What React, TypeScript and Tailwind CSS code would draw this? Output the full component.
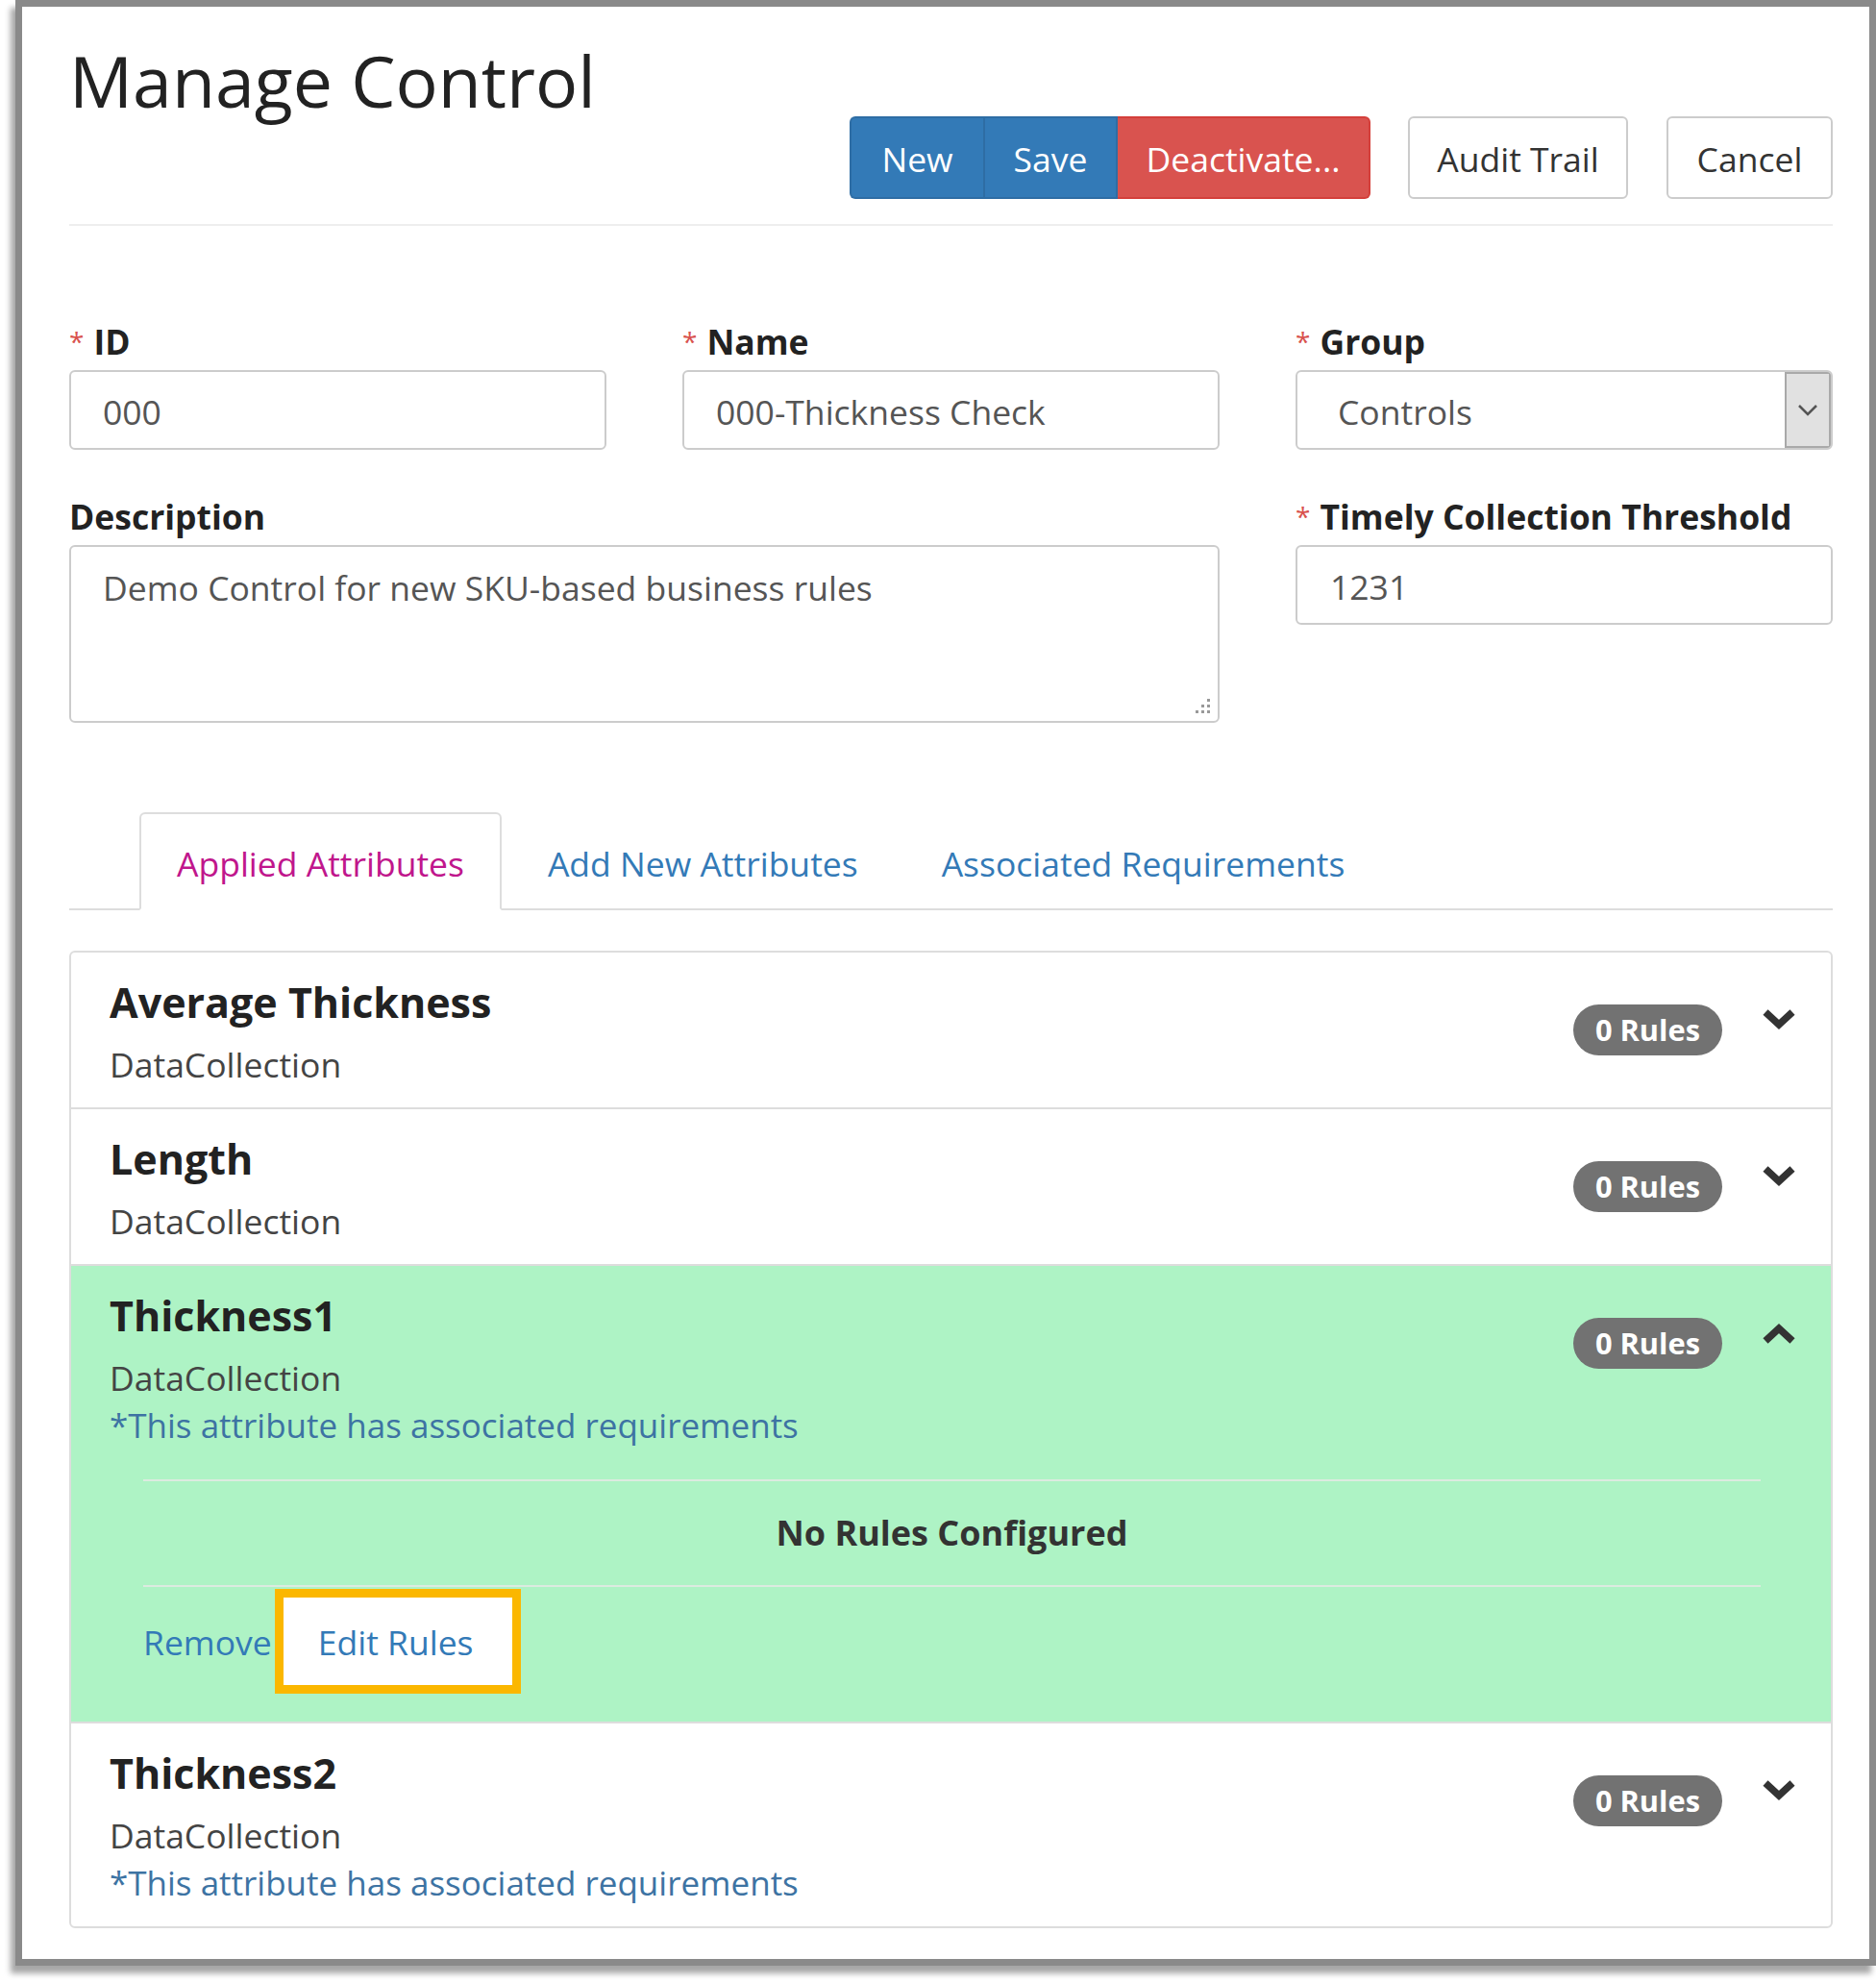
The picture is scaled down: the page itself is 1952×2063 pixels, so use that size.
import React from "react";

type Attribute = {
  name: string;
  type: string;
  note: boolean;
  open: boolean;
};

const attributes: Attribute[] = [
  { name: "Average Thickness", type: "DataCollection", note: false, open: false },
  { name: "Length", type: "DataCollection", note: false, open: false },
  { name: "Thickness1", type: "DataCollection", note: true, open: true },
  { name: "Thickness2", type: "DataCollection", note: true, open: false },
];

const Chevron: React.FC<{ up?: boolean }> = ({ up }) => (
  <svg width="38" height="26" viewBox="0 0 38 26" className="shrink-0">
    <polyline
      points={up ? "5,21 19,8 33,21" : "5,5 19,18 33,5"}
      fill="none"
      stroke="#333"
      strokeWidth="7.5"
    />
  </svg>
);

const Label: React.FC<{ text: string; required?: boolean }> = ({ text, required }) => (
  <label className="mb-[5px] block text-[35.5px] leading-[50px] font-bold text-[#222]">
    {required && <span className="mr-[10px] align-top text-[28px] font-normal text-[#d9534f]">*</span>}
    {text}
  </label>
);

const Field: React.FC<{ label: string; value: string; select?: boolean }> = ({ label, value, select }) => (
  <div>
    <Label text={label} required />
    <div className="flex h-[83px] items-center overflow-hidden rounded-[6px] border-2 border-[#ccc] bg-white text-[35.5px] text-[#555]">
      <span className={select ? "flex-1 pt-[5px] pl-[42px]" : "flex-1 pt-[5px] pl-[33px]"}>{value}</span>
      {select && (
        <div className="flex h-full w-[48px] items-center justify-center border-2 border-[#a9a9a9] bg-[#e1e1e1]">
          <svg width="22" height="14" viewBox="0 0 22 14">
            <polyline points="2,2 11,11 20,2" fill="none" stroke="#555" strokeWidth="2.5" />
          </svg>
        </div>
      )}
    </div>
  </div>
);

const AttributeRow: React.FC<{ item: Attribute; first: boolean; last: boolean }> = ({ item, first, last }) => (
  <div
    className={`px-[40px] pt-[27px] ${first ? "" : "border-t-2 border-[#ddd]"} ${
      item.open ? "bg-[#aef3c5] pb-[29px]" : last ? "pb-[20px]" : "pb-[20px]"
    }`}
  >
    <div className="flex items-start justify-between">
      <div>
        <h4 className="mb-[14px] text-[43px] leading-[50px] font-bold text-[#222]">{item.name}</h4>
        <p className="text-[35.5px] leading-[50px] text-[#444]">{item.type}</p>
        {item.note && (
          <p className="text-[35px] leading-[50px] text-[#3d73a3]">*This attribute has associated requirements</p>
        )}
      </div>
      <div className="-mr-[5px] flex items-start gap-[40px]">
        <span className="mt-[27px] flex h-[53px] items-center rounded-full bg-[#727272] px-[23px] text-[30.8px] font-bold text-white">
          0 Rules
        </span>
        <div className="mt-[30px]">
          <Chevron up={item.open} />
        </div>
      </div>
    </div>
    {item.open && (
      <div className="mt-[31px] mr-[33px] ml-[35px]">
        <div className="border-y-2 border-[#dcebe0] py-[29px] text-center text-[36px] leading-[50px] font-bold text-[#333]">
          No Rules Configured
        </div>
        <div className="mt-[2px] flex items-center text-[35.5px] text-[#337ab7]">
          <a className="leading-[50px]">Remove</a>
          <span className="ml-[3px] flex h-[109px] items-center border-[9px] border-[#fbb700] bg-white pr-[40px] pl-[36px] leading-[50px]">
            Edit Rules
          </span>
        </div>
      </div>
    )}
  </div>
);

export default function App() {
  return (
    <div className="h-[2063px] w-[1952px] bg-white font-['Open_Sans',sans-serif] text-[#333]">
      <div className="ml-[16px] box-border h-[2045px] w-[1936px] border-[7px] border-[#8a8a8a] bg-white pr-[38px] pl-[49px] shadow-[-5px_8px_6px_rgba(0,0,0,0.35)]">
        <header className="box-border flex h-[228px] items-start justify-between border-b-2 border-[#eee]">
          <h1 className="pt-[40px] text-[73.5px] leading-none font-normal text-[#222]">Manage Control</h1>
          <div className="mt-[114px] flex items-center text-[35.5px]">
            <div className="flex h-[86px] text-white">
              <button className="w-[139px] rounded-l-[6px] border-2 border-r-0 border-[#2e6da4] bg-[#337ab7] pt-[4px]">New</button>
              <button className="w-[140px] border-2 border-[#2e6da4] bg-[#337ab7] pt-[4px]">Save</button>
              <button className="w-[263px] rounded-r-[6px] border-2 border-l-0 border-[#d43f3a] bg-[#d9534f] pt-[4px]">
                Deactivate...
              </button>
            </div>
            <button className="ml-[39px] h-[86px] w-[229px] rounded-[6px] border-2 border-[#ccc] bg-white pt-[4px] text-[#333]">
              Audit Trail
            </button>
            <button className="ml-[40px] h-[86px] w-[173px] rounded-[6px] border-2 border-[#ccc] bg-white pt-[4px] text-[#333]">
              Cancel
            </button>
          </div>
        </header>

        <div className="mt-[95px] grid grid-cols-3 gap-x-[79px]">
          <Field label="ID" value="000" />
          <Field label="Name" value="000-Thickness Check" />
          <Field label="Group" value="Controls" select />
          <div className="col-span-2 mt-[44px]">
            <Label text="Description" />
            <div className="relative h-[185px] rounded-[6px] border-2 border-[#ccc] bg-white px-[33px] pt-[17px] text-[35.5px] leading-[50px] text-[#555]">
              Demo Control for new SKU-based business rules
              <svg className="absolute right-[6px] bottom-[6px]" width="20" height="20" viewBox="0 0 20 20">
                <rect x="15" y="3" width="3" height="3" fill="#999" />
                <rect x="9" y="9" width="3" height="3" fill="#999" />
                <rect x="15" y="9" width="3" height="3" fill="#999" />
                <rect x="3" y="15" width="3" height="3" fill="#999" />
                <rect x="9" y="15" width="3" height="3" fill="#999" />
                <rect x="15" y="15" width="3" height="3" fill="#999" />
              </svg>
            </div>
          </div>
          <div className="mt-[44px]">
            <Label text="Timely Collection Threshold" required />
            <div className="flex h-[83px] items-center rounded-[6px] border-2 border-[#ccc] bg-white pt-[5px] pl-[34px] text-[35.5px] text-[#555]">
              1231
            </div>
          </div>
        </div>

        <ul className="mt-[93px] flex border-b-2 border-[#ddd] pl-[73px] text-[35.5px]">
          <li className="-mb-[2px] mr-[9px] flex h-[102px] items-center rounded-t-[6px] border-2 border-[#ddd] border-b-transparent bg-white px-[37px] pt-[5px] text-[#c0168c]">
            Applied Attributes
          </li>
          <li className="-mb-[2px] mr-[9px] flex h-[102px] items-center border-2 border-transparent px-[37px] pt-[5px] text-[#337ab7]">
            Add New Attributes
          </li>
          <li className="-mb-[2px] flex h-[102px] items-center border-2 border-transparent px-[37px] pt-[5px] text-[#337ab7]">
            Associated Requirements
          </li>
        </ul>

        <div className="mt-[42px] overflow-hidden rounded-[6px] border-2 border-[#ddd]">
          {attributes.map((item, i) => (
            <AttributeRow key={item.name} item={item} first={i === 0} last={i === attributes.length - 1} />
          ))}
        </div>
      </div>
    </div>
  );
}
